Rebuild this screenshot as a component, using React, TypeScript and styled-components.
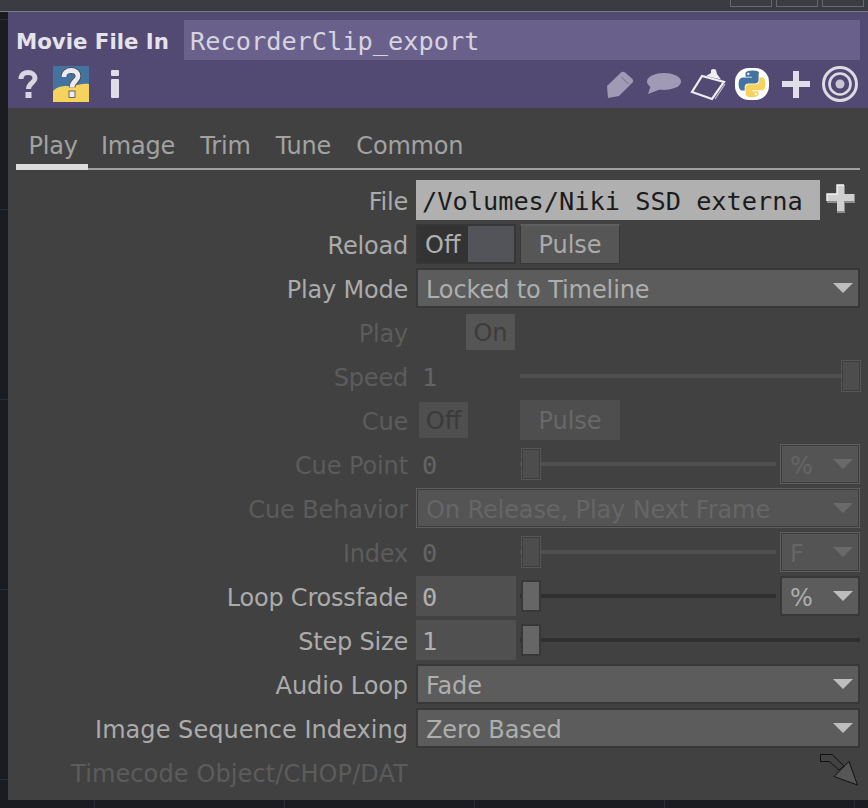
import React from "react";
import styled, { createGlobalStyle } from "styled-components";

const Global = createGlobalStyle`
  html, body { margin: 0; padding: 0; background: #1a1c21; }
  body { width: 868px; height: 808px; overflow: hidden; font-family: "DejaVu Sans", sans-serif; }
`;

const Desk = styled.div`
  width: 868px;
  height: 808px;
  display: flex;
  flex-direction: column;
  background-color: #1a1c21;
  background-image:
    repeating-linear-gradient(90deg, transparent 0 94px, #2a2c38 94px 95px, transparent 95px 190px),
    repeating-linear-gradient(0deg, transparent 0 28px, #2a2c38 28px 29px, transparent 29px 190px);
`;
const TopStrip = styled.div`
  height: 11px;
  flex: none;
  background: #3a3c43;
  border-bottom: 1px solid #7a7a7c;
  display: flex;
  justify-content: flex-end;
  gap: 4px;
  padding-right: 4px;
`;
const TopButton = styled.div`
  width: 42px;
  height: 7px;
  box-sizing: border-box;
  border: 1px solid #66686c;
  border-top: none;
`;
const Wrap = styled.div`
  position: relative;
`;
const Panel = styled.div`
  margin-left: 8px;
  width: 860px;
  height: 788px;
  display: flex;
  flex-direction: column;
  background: #414141;
`;
const Header = styled.div`
  height: 96px;
  flex: none;
  background: #534a74;
  box-sizing: border-box;
  padding: 8px 8px 0 9px;
  display: flex;
  flex-direction: column;
`;
const TitleRow = styled.div`
  display: flex;
  height: 40px;
  align-items: center;
`;
const OpName = styled.div`
  width: 167px;
  margin-left: -1px;
  margin-right: 1px;
  padding-top: 2px;
  flex: none;
  font-weight: 700;
  font-size: 21.3px;
  color: #e4e3ea;
  white-space: nowrap;
`;
const NameField = styled.div`
  flex: 1;
  height: 40px;
  line-height: 43px;
  background: #6a608c;
  padding-left: 6px;
  font-family: "DejaVu Sans Mono", monospace;
  font-size: 25.3px;
  color: #d5d3de;
`;
const IconRow = styled.div`
  height: 48px;
  display: flex;
  align-items: center;
`;
const IconSpacer = styled.div`
  flex: 1;
`;
const IconSlot = styled.div<{ $w: number; $ml?: number; $mr?: number }>`
  width: ${(p) => p.$w}px;
  height: 40px;
  margin-left: ${(p) => p.$ml ?? 0}px;
  margin-right: ${(p) => p.$mr ?? 0}px;
  flex: none;
  display: flex;
  align-items: center;
  justify-content: center;
  filter: blur(0.5px);
  svg { display: block; overflow: visible; }
`;
const Body = styled.div`
  flex: 1;
  display: flex;
  flex-direction: column;
  padding: 14px 0 0 8px;
`;
const Tabs = styled.div`
  display: flex;
  width: 844px;
  height: 48px;
  box-sizing: border-box;
  border-bottom: 2px solid #a0a0a0;
`;
const Tab = styled.div<{ $active?: boolean }>`
  height: 46px;
  padding: ${(p) => (p.$active ? "0 10.6px 0 12.5px" : "0 12.6px")};
  font-size: 24px;
  letter-spacing: -0.2px;
  line-height: 48px;
  color: #a2a2a2;
  position: relative;
  ${(p) =>
    p.$active
      ? `&::after { content: ""; position: absolute; left: 0; right: 0; bottom: -2px; height: 6px; background: #dcdcdc; }`
      : ""}
`;
const Rows = styled.div`
  display: flex;
  flex-direction: column;
  gap: 4px;
  margin-top: 10px;
`;
const Row = styled.div`
  display: flex;
  height: 40px;
  align-items: center;
  gap: 8px;
`;
const Label = styled.div<{ $off?: boolean; $track?: number }>`
  width: 400px;
  height: 40px;
  margin-left: -8px;
  flex: none;
  text-align: right;
  font-size: 24px;
  letter-spacing: ${(p) => p.$track ?? -0.2}px;
  line-height: 44px;
  white-space: nowrap;
  color: ${(p) => (p.$off ? "#5c5c5c" : "#ababab")};
`;
const FileField = styled.div`
  width: 404px;
  height: 40px;
  line-height: 43px;
  flex: none;
  box-sizing: border-box;
  padding-left: 6px;
  background: #b0b0b0;
  color: #1c1c1c;
  font-family: "DejaVu Sans Mono", monospace;
  font-size: 25.3px;
  white-space: nowrap;
  overflow: hidden;
`;
const PlusButton = styled.svg`
  margin-left: -2px;
  margin-top: -3px;
  flex: none;
`;
const Toggle = styled.div`
  width: 100px;
  height: 40px;
  box-sizing: border-box;
  border: 2px solid #363636;
  background: #53535a;
  flex: none;
  display: flex;
`;
const ToggleOff = styled.div`
  width: 50px;
  padding-left: 7px;
  box-sizing: border-box;
  background: #333333;
  color: #b0b0b0;
  font-size: 24px;
  line-height: 39px;
`;
const Pulse = styled.div<{ $off?: boolean; $ml?: number }>`
  width: 100px;
  height: 40px;
  flex: none;
  margin-left: ${(p) => p.$ml ?? 0}px;
  box-sizing: border-box;
  text-align: center;
  font-size: 24px;
  ${(p) =>
    p.$off
      ? `background: #4e4e4e; color: #686868; line-height: 43px;`
      : `background: #565656; border: 1px solid #383838; border-top: 2px solid #5f5f5f; color: #aaaaaa; line-height: 39px;`}
`;
const Flat = styled.div<{ $ml: number; $bg: string; $fg: string }>`
  width: 49px;
  height: 36px;
  flex: none;
  margin-left: ${(p) => p.$ml}px;
  background: ${(p) => p.$bg};
  color: ${(p) => p.$fg};
  font-size: 24px;
  line-height: 38px;
  text-align: center;
`;
const Drop = styled.div<{ $w?: number; $off?: boolean }>`
  width: ${(p) => p.$w ?? 444}px;
  height: 40px;
  flex: none;
  box-sizing: border-box;
  display: flex;
  align-items: center;
  justify-content: space-between;
  font-size: 24px;
  letter-spacing: -0.1px;
  ${(p) =>
    p.$off
      ? `padding: 3px 6px 0 9px; background: #545454; border: 1px solid #5e5e5e; box-shadow: inset 0 0 0 1px #3c3c3c; color: #666666;`
      : `padding: 3px 5px 0 8px; background: #5c5c5c; border: 2px solid #383838; color: #aeaeae;`}
`;
const Arrow = styled.i<{ $off?: boolean }>`
  width: 0;
  height: 0;
  margin-top: -3px;
  border-left: 10px solid transparent;
  border-right: 10px solid transparent;
  border-top: 10px solid ${(p) => (p.$off ? "#6a6a6a" : "#bebebe")};
`;
const NumField = styled.div<{ $box?: boolean; $off?: boolean }>`
  width: 100px;
  height: 40px;
  line-height: 43px;
  flex: none;
  box-sizing: border-box;
  padding-left: 6px;
  font-family: "DejaVu Sans Mono", monospace;
  font-size: 25.3px;
  background: ${(p) => (p.$box ? "#505050" : "transparent")};
  color: ${(p) => (p.$off ? "#646464" : "#b0b0b0")};
`;
const Slider = styled.div<{ $w: number; $off?: boolean }>`
  width: ${(p) => p.$w}px;
  margin: 0 -4px;
  height: 4px;
  flex: none;
  position: relative;
  background: ${(p) => (p.$off ? "#4f4f4f" : "#2f2f2f")};
`;
const Thumb = styled.div<{ $end?: boolean; $off?: boolean }>`
  position: absolute;
  top: -14px;
  ${(p) => (p.$end ? "right: -1px;" : "left: 1px;")}
  width: 20px;
  height: 32px;
  box-sizing: border-box;
  ${(p) =>
    p.$off
      ? `background: #4d4d4d; border: 1px solid #565656; box-shadow: inset 0 0 0 1px #3d3d3d;`
      : `background: #666666; border: 2px solid #383838;`}
`;
const CornerArrow = styled.svg`
  position: absolute;
  left: 819px;
  top: 741px;
`;

const PythonPaths = () => (
  <>
    <path fill="#44739f" d="M54.9 0C26.9 0 28.6 12.2 28.6 12.2l0 12.6h26.7v3.8H18s-18-2-18 26.4c0 28.4 15.7 27.4 15.7 27.4h9.4V69.3s-.5-15.7 15.5-15.7h26.6s15 .2 15-14.5V14.7S94.5 0 54.9 0zM40.1 8.5a4.8 4.8 0 1 1 0 9.6 4.8 4.8 0 0 1 0-9.6z" />
    <path fill="#f6d35e" d="M55.7 109.7c28 0 26.3-12.2 26.3-12.2V84.9H55.3v-3.8h37.3s18 2 18-26.4-15.7-27.4-15.7-27.4h-9.4v13.2s.5 15.7-15.5 15.7H43.4s-15-.2-15 14.5v24.4s-2.3 14.8 27.3 14.8zM70.5 101.2a4.8 4.8 0 1 1 0-9.6 4.8 4.8 0 0 1 0 9.6z" />
  </>
);

export default function App() {
  return (
    <Desk>
      <Global />
      <TopStrip>
        <TopButton />
        <TopButton />
        <TopButton />
      </TopStrip>
      <Wrap>
        <Panel>
          <Header>
            <TitleRow>
              <OpName>Movie File In</OpName>
              <NameField>RecorderClip_export</NameField>
            </TitleRow>
            <IconRow>
              <IconSlot $w={20} $ml={1}>
                <svg width="20" height="28" viewBox="0 0 20 28" fill="none">
                  <path d="M3 9 C3 4.5 6.5 2.5 10 2.5 C14 2.5 17 4.8 17 8.3 C17 12.5 10.5 13 10.5 19" stroke="#d8d6e0" strokeWidth="5" />
                  <rect x="7.5" y="22" width="6" height="6" fill="#d8d6e0" />
                </svg>
              </IconSlot>
              <IconSlot $w={36} $ml={15}>
                <svg width="36" height="36" viewBox="0 0 36 36" fill="none">
                  <rect width="36" height="36" fill="#44739f" />
                  <path d="M0 36 V25 C6 19 12 20 18 20 C24 20 29 17 36 18 V36 Z" fill="#f6d35e" />
                  <path d="M11 11 C11 6.5 14.5 4.5 18 4.5 C22.5 4.5 25 7 25 10.3 C25 15 19 15 19 21.5" stroke="#4a4a55" strokeWidth="6.5" />
                  <path d="M11 11 C11 6.5 14.5 4.5 18 4.5 C22.5 4.5 25 7 25 10.3 C25 15 19 15 19 21.5" stroke="#ecebf0" strokeWidth="4.8" />
                  <rect x="16" y="25" width="6" height="6.5" fill="#ecebf0" stroke="#4a4a55" strokeWidth="0.8" />
                </svg>
              </IconSlot>
              <IconSlot $w={10} $ml={21}>
                <svg width="10" height="28" viewBox="0 0 10 28">
                  <rect x="1" y="0" width="8" height="6" rx="1" fill="#dedce6" />
                  <rect x="1" y="9" width="8" height="19" rx="1" fill="#dedce6" />
                </svg>
              </IconSlot>
              <IconSpacer />
              <IconSlot $w={27}>
                <svg width="27" height="27" viewBox="0 0 27 27">
                  <path d="M0 15 L14 1.5 Q16 0 18 1.5 L25.5 8 Q27 10 25.5 11.5 L12 25 L1 27 Z" fill="#a09ab5" />
                  <path d="M14.5 6 L21.5 13" stroke="#534a74" strokeWidth="1" opacity="0.6" />
                </svg>
              </IconSlot>
              <IconSlot $w={34} $ml={13}>
                <svg width="34" height="22" viewBox="0 0 34 22">
                  <ellipse cx="17" cy="8.5" rx="17" ry="8.5" fill="#a09ab5" />
                  <path d="M4 12 L1 21 L14 16 Z" fill="#a09ab5" />
                </svg>
              </IconSlot>
              <IconSlot $w={34} $ml={10}>
                <svg width="34" height="32" viewBox="0 0 34 32" fill="none">
                  <path d="M11 8 L1 24 L21 31 L33 14 Z" stroke="#eeeef2" strokeWidth="2.2" />
                  <path d="M34 16 L24 31" stroke="#c8c6d4" strokeWidth="1.1" />
                  <path d="M15 8 L20 5 L20 2 Q23 0 25 2 L26 6 L30 11.5 Z" fill="#eeeef2" />
                </svg>
              </IconSlot>
              <IconSlot $w={34} $ml={10}>
                <svg width="34" height="32" viewBox="0 0 34 32">
                  <rect width="34" height="32" rx="14" fill="#fff" />
                  <g transform="translate(3.6 2.6) scale(0.243)">
                    <PythonPaths />
                  </g>
                </svg>
              </IconSlot>
              <IconSlot $w={28} $ml={13}>
                <svg width="28" height="28" viewBox="0 0 28 28">
                  <path d="M11 1 H17 V11 H28 V17 H17 V28 H11 V17 H0 V11 H11 Z" fill="#e0dfe7" />
                </svg>
              </IconSlot>
              <IconSlot $w={36} $ml={12} $mr={2}>
                <svg width="36" height="36" viewBox="0 0 36 36" fill="none">
                  <circle cx="18" cy="18" r="16.5" stroke="#dcdbe3" strokeWidth="3" />
                  <circle cx="18" cy="18" r="10.5" stroke="#dcdbe3" strokeWidth="2.6" />
                  <circle cx="18" cy="18" r="4.5" fill="#c8c6d4" />
                </svg>
              </IconSlot>
            </IconRow>
          </Header>
          <Body>
            <Tabs>
              <Tab $active>Play</Tab>
              <Tab>Image</Tab>
              <Tab>Trim</Tab>
              <Tab>Tune</Tab>
              <Tab>Common</Tab>
            </Tabs>
            <Rows>
              <Row>
                <Label>File</Label>
                <FileField>/Volumes/Niki SSD externa</FileField>
                <PlusButton width="30" height="30" viewBox="0 0 30 30">
                  <path d="M12 2 H20 V11 H30 V20 H20 V30 H12 V20 H2 V11 H12 Z" fill="#8c8c8c" transform="translate(-1 -1)" />
                  <path d="M11 1 H18 V10 H28 V17 H18 V27 H11 V17 H1 V10 H11 Z" fill="#cfcfcf" />
                  <path d="M1 17 V10 H11 V1 H18" fill="none" stroke="#f6f6f6" strokeWidth="1.4" />
                </PlusButton>
              </Row>
              <Row>
                <Label>Reload</Label>
                <Toggle><ToggleOff>Off</ToggleOff></Toggle>
                <Pulse $ml={-4}>Pulse</Pulse>
              </Row>
              <Row>
                <Label>Play Mode</Label>
                <Drop>Locked to Timeline<Arrow /></Drop>
              </Row>
              <Row>
                <Label $off>Play</Label>
                <Flat $ml={50} $bg="#555555" $fg="#3c3c3c">On</Flat>
              </Row>
              <Row>
                <Label $off>Speed</Label>
                <NumField $off>1</NumField>
                <Slider $w={340} $off><Thumb $end $off /></Slider>
              </Row>
              <Row>
                <Label $off>Cue</Label>
                <Flat $ml={3} $bg="#4f4f4f" $fg="#3a3a3a">Off</Flat>
                <Pulse $off $ml={44}>Pulse</Pulse>
              </Row>
              <Row>
                <Label $off $track={-0.1}>Cue Point</Label>
                <NumField $off>0</NumField>
                <Slider $w={256} $off><Thumb $off /></Slider>
                <Drop $w={80} $off>%<Arrow $off /></Drop>
              </Row>
              <Row>
                <Label $off $track={-0.1}>Cue Behavior</Label>
                <Drop $off>On Release, Play Next Frame<Arrow $off /></Drop>
              </Row>
              <Row>
                <Label $off>Index</Label>
                <NumField $off>0</NumField>
                <Slider $w={256} $off><Thumb $off /></Slider>
                <Drop $w={80} $off>F<Arrow $off /></Drop>
              </Row>
              <Row>
                <Label>Loop Crossfade</Label>
                <NumField $box>0</NumField>
                <Slider $w={256}><Thumb /></Slider>
                <Drop $w={80}>%<Arrow /></Drop>
              </Row>
              <Row>
                <Label>Step Size</Label>
                <NumField $box>1</NumField>
                <Slider $w={340}><Thumb /></Slider>
              </Row>
              <Row>
                <Label $track={-0.1}>Audio Loop</Label>
                <Drop>Fade<Arrow /></Drop>
              </Row>
              <Row>
                <Label $track={0.04}>Image Sequence Indexing</Label>
                <Drop>Zero Based<Arrow /></Drop>
              </Row>
              <Row>
                <Label $off $track={0.12}>Timecode Object/CHOP/DAT</Label>
              </Row>
            </Rows>
          </Body>
        </Panel>
        <CornerArrow width="40" height="34" viewBox="0 0 40 34">
          <path d="M1.5 1.5 H13 L25 13 L20 17 L10.5 8.5 H1.5 Z" fill="#424242" stroke="#111" strokeWidth="1" />
          <path d="M30 8.5 L38.5 32 L15 23.5 Z" fill="#565656" stroke="#111" strokeWidth="1" />
        </CornerArrow>
      </Wrap>
    </Desk>
  );
}
